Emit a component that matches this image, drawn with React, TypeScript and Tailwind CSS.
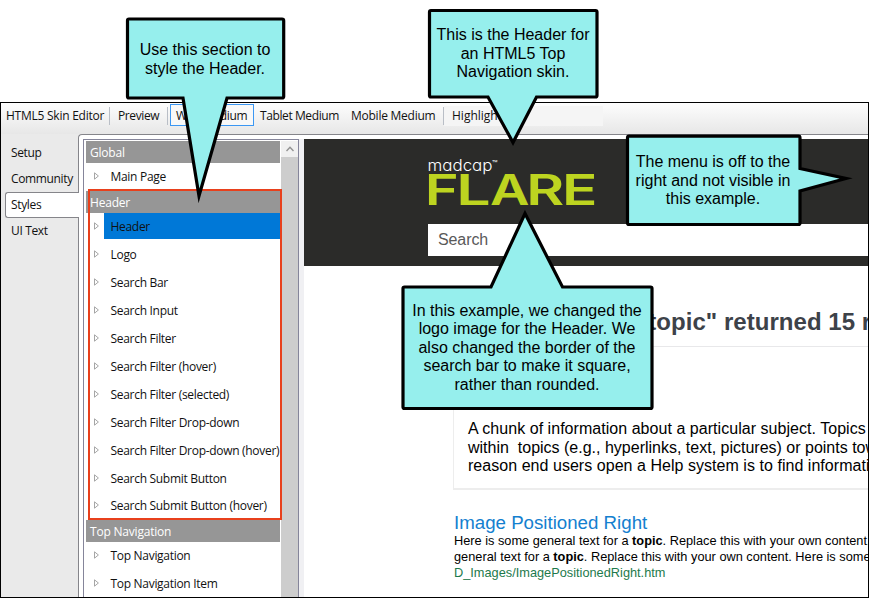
import React from "react";

const headerItems = [
  { label: "Header", selected: true },
  { label: "Logo" },
  { label: "Search Bar" },
  { label: "Search Input" },
  { label: "Search Filter" },
  { label: "Search Filter (hover)" },
  { label: "Search Filter (selected)" },
  { label: "Search Filter Drop-down" },
  { label: "Search Filter Drop-down (hover)" },
  { label: "Search Submit Button", short: true },
  { label: "Search Submit Button (hover)" },
];

function GroupTitle({ children }: { children: React.ReactNode }) {
  return (
    <div className="ml-[2px] flex h-[22px] w-[194px] shrink-0 items-center bg-[#969696] pl-1 tracking-[-0.2px] text-white">
      <span className="relative top-px">{children}</span>
    </div>
  );
}

function TreeItem({ label, selected, short }: { label: string; selected?: boolean; short?: boolean }) {
  return (
    <div className={`flex shrink-0 items-start ${short ? "h-[27px]" : "h-7"}`}>
      <svg className="ml-[9px] mt-[9px] h-2 w-[7px] shrink-0" viewBox="0 0 7 8" fill="none" stroke="#a6a6a6">
        <path d="M1.500 .8V7.200L5.400 4Z" />
      </svg>
      <div
        className={`ml-1 flex h-[26px] w-44 items-center pl-[6.500px] ${selected ? "bg-[#0078d7]" : ""}`}
      >
        <span className="relative top-px">{label}</span>
      </div>
    </div>
  );
}

function Callout({ path, box, children }: { path: string; box: string; children: React.ReactNode }) {
  return (
    <>
      <svg className="absolute left-0 top-0 h-[598px] w-[869px]" viewBox="0 0 869 598">
        <path d={path} fill="#96efed" stroke="#000" strokeWidth="3.2" strokeMiterlimit="12" />
      </svg>
      <div
        className={`absolute flex items-center justify-center whitespace-nowrap text-center text-[16px] leading-[18.6px] text-black ${box}`}
      >
        <div>{children}</div>
      </div>
    </>
  );
}

const logoLetters = [
  { ch: "F", x: -3.3, w: 34 },
  { ch: "L", x: 28.3, w: 34.5 },
  { ch: "A", x: 62, w: 39.5 },
  { ch: "R", x: 98.3, w: 38 },
  { ch: "E", x: 134, w: 35.5 },
];

export default function App() {
  return (
    <div className="relative h-[598px] w-[869px] overflow-hidden bg-white pt-[102px] font-['Liberation_Sans',Arial,sans-serif]">
      <div className="flex h-[496px] flex-col overflow-hidden border border-black bg-[#eaeaea]">
        <div className="flex h-[31px] shrink-0 items-start bg-linear-to-b from-[#fdfdfd] to-[#e7e7e7] font-['Open_Sans','Noto_Sans',sans-serif] text-[12px] leading-[26px] whitespace-nowrap text-[#111]">
          <span className="ml-[5px] w-[103px] tracking-[-0.25px]">HTML5 Skin Editor</span>
          <span className="mt-1 h-[18px] w-px bg-[#b9bec6]" />
          <span className="ml-2 w-[49px] tracking-[-0.4px]">Preview</span>
          <span className="mt-1 h-[18px] w-px bg-[#b9bec6]" />
          <span className="ml-[2px] mt-px h-[22px] w-[84px] border border-[#3b97f3] bg-[#f8f8f8] pl-[5px] leading-[22px] tracking-[-0.35px]">
            Web Medium
          </span>
          <span className="ml-[6px] w-[91px] tracking-[-0.4px]">Tablet Medium</span>
          <span className="w-[92px] tracking-[-0.25px]">Mobile Medium</span>
          <span className="mt-1 h-[18px] w-px bg-[#b9bec6]" />
          <span className="mt-[3px] h-5 w-[159px] bg-[#f5f5f5] pl-2 leading-5">Highlight</span>
        </div>
        <div className="flex min-h-0 grow">
          <div className="flex w-[77px] shrink-0 flex-col pt-[6px] font-['Open_Sans','Noto_Sans',sans-serif] text-[12px] leading-[26px] tracking-[-0.35px] text-[#111]">
            <span className="pl-[10px]">Setup</span>
            <span className="pl-[10px]">Community</span>
            <span className="relative z-10 ml-1 h-[26px] w-[74px] rounded-l-[3px] border border-r-0 border-[#85858a] bg-white pl-[5px] leading-6">
              Styles
            </span>
            <span className="pl-[10px]">UI Text</span>
          </div>
          <div className="flex min-w-0 grow rounded-tl-[4px] border-l border-t border-[#85858a] bg-white pl-1 pt-1">
            <div className="flex w-[216px] shrink-0 border-x border-t border-[#85859a] bg-white pt-px">
              <div className="flex w-[197px] shrink-0 flex-col overflow-hidden font-['Open_Sans','Noto_Sans',sans-serif] text-[12px] leading-[18px] tracking-[-0.3px] whitespace-nowrap text-[#111]">
                <GroupTitle>Global</GroupTitle>
                <TreeItem label="Main Page" />
                <GroupTitle>Header</GroupTitle>
                {headerItems.map((it) => (
                  <TreeItem key={it.label} label={it.label} selected={it.selected} short={it.short} />
                ))}
                <GroupTitle>Top Navigation</GroupTitle>
                <TreeItem label="Top Navigation" />
                <TreeItem label="Top Navigation Item" />
              </div>
              <div className="grow bg-[#cdcdcd]">
                <div className="flex h-4 items-center justify-center bg-[#f0f0f0]">
                  <svg className="h-[6px] w-2" viewBox="0 0 8 6" fill="none" stroke="#929292" strokeWidth="1.4">
                    <path d="M.5 5L4 1.2L7.5 5" />
                  </svg>
                </div>
              </div>
            </div>
            <div className="w-[5px] shrink-0 bg-[#f0f0f3]" />
            <div className="min-w-0 grow overflow-hidden whitespace-nowrap bg-white">
              <div className="h-[127px] bg-[#2b2b29] pl-[124px] pt-[17px]">
                <svg className="h-[68px] w-[180px]" viewBox="0 0 180 68">
                  <text
                    x="-0.5"
                    y="14.5"
                    fontSize="16.5"
                    fontWeight="300"
                    fill="#fff"
                    textLength="65"
                    lengthAdjust="spacingAndGlyphs"
                    className="font-['Inter',sans-serif] [font-feature-settings:'cv11'_1]"
                  >
                    madcap
                  </text>
                  <text x="64" y="11" fontSize="9" fill="#fff" className="font-['Inter',sans-serif]">
                    ™
                  </text>
                  {logoLetters.map((l) => (
                    <text
                      key={l.ch}
                      x={l.x}
                      y="49"
                      fontSize="42"
                      fontWeight="600"
                      fill="#bdd420"
                      textLength={l.w}
                      lengthAdjust="spacingAndGlyphs"
                      className="font-['Inter',sans-serif]"
                    >
                      {l.ch}
                    </text>
                  ))}
                </svg>
                <div className="flex h-8 items-center bg-white pl-[10px] text-[16px] tracking-[-0.1px] text-[#595959]">Search</div>
              </div>
              <div className="pl-[150px] pt-[41px]">
                <h1 className="h-10 border-b border-[#e8e8ea] text-[24px] leading-[30px] font-bold tracking-[0.04px] text-[#3d4249]">
                  Your search for "topic" returned 15 results.
                </h1>
                <div className="-ml-px mt-8 h-[111px] border-b-2 border-l border-[#ededed] pl-[14px] pt-[41px] text-[16px] leading-[18.6px] tracking-[0.04px] text-black">
                  <p>A chunk of information about a particular subject. Topics are</p>
                  <p className="tracking-[0px]">within&nbsp; topics (e.g., hyperlinks, text, pictures) or points toward</p>
                  <p>reason end users open a Help system is to find information</p>
                </div>
                <div className="mt-[22px] text-[12.78px] leading-4 text-black">
                  <h2 className="text-[18.7px] leading-[21px] text-[#1480cf]">Image Positioned Right</h2>
                  <p>
                    Here is some general text for a <b>topic</b>. Replace this with your own content. Here is
                  </p>
                  <p>
                    general text for a <b>topic</b>. Replace this with your own content. Here is some general
                  </p>
                  <p className="text-[#1d7a4c]">D_Images/ImagePositionedRight.htm</p>
                </div>
              </div>
            </div>
          </div>
        </div>
      </div>

      <div className="absolute left-[88px] top-[189px] h-[331px] w-[194px] border-2 border-[#e8401c]" />

      <Callout
        path="M129 19H282Q283.700 19 283.700 20.700V96.500Q283.700 98 282 98H227L199 196L183 98H129Q127.500 98 127.500 96.500V20.700Q127.500 19 129 19Z"
        box="left-[127px] top-[20px] h-[79px] w-[156px]"
      >
        Use this section to
        <br />
        style the Header.
      </Callout>
      <Callout
        path="M431 10.500H595.500Q597 10.500 597 12V95.500Q597 97 595.500 97H536.500L513 142.500L488 97H431Q429.500 97 429.500 95.500V12Q429.500 10.500 431 10.500Z"
        box="left-[429px] top-[11px] h-[86px] w-[168px]"
      >
        This is the Header for
        <br />
        an HTML5 Top
        <br />
        Navigation skin.
      </Callout>
      <Callout
        path="M629 136.200H798.500Q800 136.200 800 138V168.500L846 178.500L800 191V223Q800 224.500 798.500 224.500H629Q627.500 224.500 627.500 223V138Q627.500 136.200 629 136.200Z"
        box="left-[627px] top-[137px] h-[88px] w-[172px]"
      >
        The menu is off to the
        <br />
        right and not visible in
        <br />
        this example.
      </Callout>
      <Callout
        path="M404.500 287H491L525 213.500L562.500 287H650.500Q652 287 652 288.500V407Q652 408.500 650.500 408.500H404.500Q403 408.500 403 407V288.500Q403 287 404.500 287Z"
        box="left-[403px] top-[288px] h-[120px] w-[248px]"
      >
        In this example, we changed the
        <br />
        logo image for the Header. We
        <br />
        also changed the border of the
        <br />
        search bar to make it square,
        <br />
        rather than rounded.
      </Callout>
    </div>
  );
}
